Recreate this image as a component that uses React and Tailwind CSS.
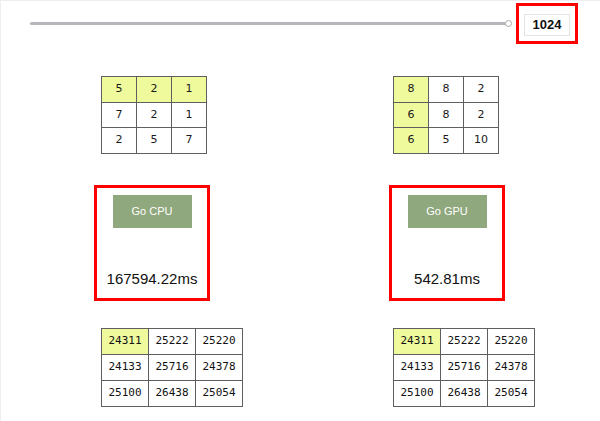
import React from "react";

const HL = "bg-[#eefa9c]";

function SmallTable({ data, hl }) {
  return (
    <div className="grid grid-cols-[repeat(3,34px)] gap-px bg-[#5f5f5f] p-px w-fit">
      {data.flat().map((v, i) => (
        <div
          key={i}
          className={`h-[24.6px] flex items-center justify-center text-[11px] text-[#1a1a1a] ${hl(i) ? HL : "bg-white"}`}
          style={{ fontFamily: '"DejaVu Sans", Verdana, sans-serif' }}
        >
          {v}
        </div>
      ))}
    </div>
  );
}

function BigTable({ data }) {
  return (
    <div className="grid grid-cols-[repeat(3,46px)] gap-px bg-[#5f5f5f] p-px w-fit">
      {data.flat().map((v, i) => (
        <div
          key={i}
          className={`h-[25px] flex items-center justify-center text-[11px] text-[#111] ${i === 0 ? HL : "bg-white"}`}
          style={{ fontFamily: '"DejaVu Sans Mono", "Liberation Mono", monospace' }}
        >
          {v}
        </div>
      ))}
    </div>
  );
}

function RunBox({ label, time }) {
  return (
    <div className="w-[116px] h-[116px] border-[3px] border-[#ff0000] flex flex-col items-center pt-[7px]">
      <button
        className="w-[79px] h-[33px] bg-[#8fa87d] text-white text-[11px] flex items-center justify-center"
        style={{ fontFamily: '"Liberation Sans", Arial, sans-serif' }}
      >
        {label}
      </button>
      <div
        className="mt-[42px] text-[15px] leading-[17px] text-[#111]"
        style={{ fontFamily: '"Liberation Sans", Arial, sans-serif' }}
      >
        {time}
      </div>
    </div>
  );
}

const big = [
  [24311, 25222, 25220],
  [24133, 25716, 24378],
  [25100, 26438, 25054],
];

export default function App() {
  return (
    <div className="w-[600px] h-[421px] bg-white overflow-hidden border-l border-t border-[#eceef2]">
      <div className="flex items-start pl-[29px] pt-[2px]">
        <div className="flex-1 flex items-center h-[41px]">
          <div className="flex-1 h-[3px] bg-[#b8b5bb] rounded-full" />
          <div className="w-[7px] h-[7px] rounded-full border border-[#a8a8a8] bg-white -ml-px" />
        </div>
        <div className="ml-[4px] mr-[22px] w-[62px] h-[41px] border-[3px] border-[#ff0000] flex justify-center pt-[8px]">
          <div
            className="w-[46px] h-[22px] border border-[#e4e4e4] bg-white flex items-center justify-center text-[13px] font-bold text-[#111]"
            style={{ fontFamily: '"Liberation Sans", Arial, sans-serif' }}
          >
            1024
          </div>
        </div>
      </div>

      <div className="flex pl-[93px] mt-[32px]">
        <div className="w-[295px] flex flex-col items-start">
          <div className="ml-[7px]">
            <SmallTable
              data={[
                [5, 2, 1],
                [7, 2, 1],
                [2, 5, 7],
              ]}
              hl={(i) => i < 3}
            />
          </div>
          <div className="mt-[31px]">
            <RunBox label="Go CPU" time="167594.22ms" />
          </div>
          <div className="ml-[7px] mt-[27px]">
            <BigTable data={big} />
          </div>
        </div>
        <div className="flex flex-col items-start">
          <div className="ml-[4px]">
            <SmallTable
              data={[
                [8, 8, 2],
                [6, 8, 2],
                [6, 5, 10],
              ]}
              hl={(i) => i % 3 === 0}
            />
          </div>
          <div className="mt-[31px]">
            <RunBox label="Go GPU" time="542.81ms" />
          </div>
          <div className="ml-[4px] mt-[27px]">
            <BigTable data={big} />
          </div>
        </div>
      </div>
    </div>
  );
}
